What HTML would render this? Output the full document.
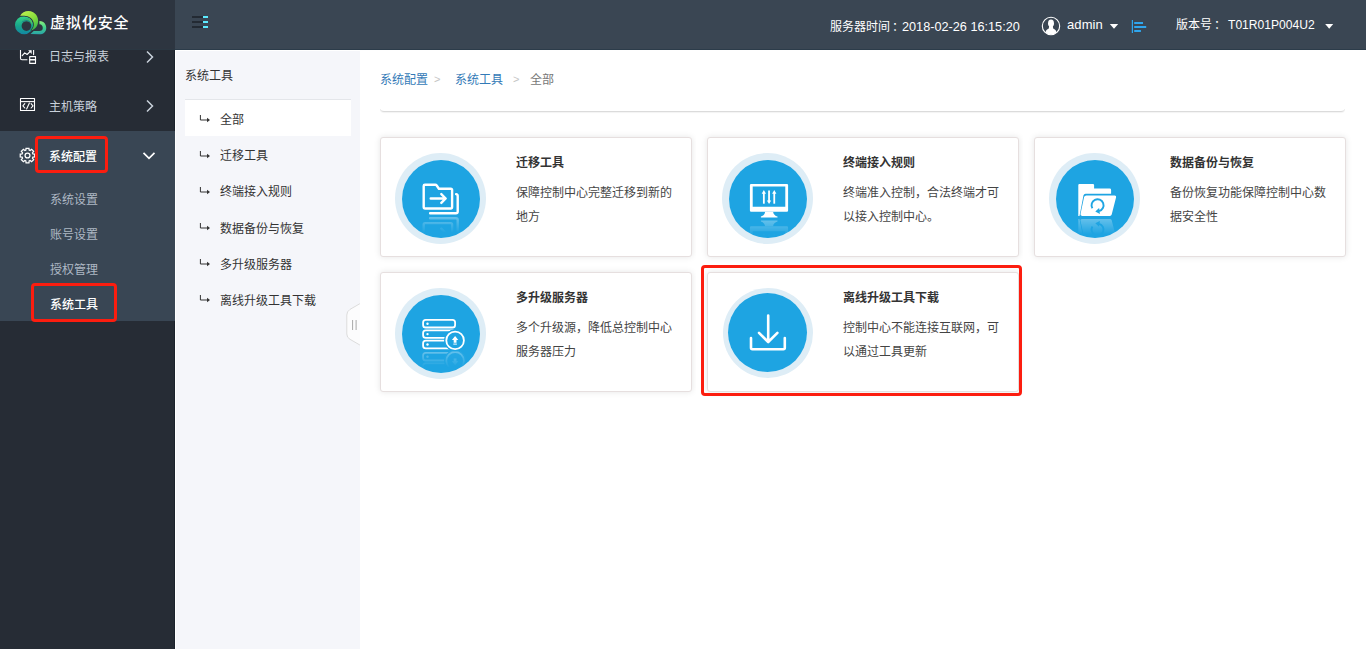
<!DOCTYPE html>
<html lang="zh-CN">
<head>
<meta charset="utf-8">
<title>虚拟化安全</title>
<style>
*{box-sizing:border-box;margin:0;padding:0}
html,body{width:1366px;height:649px;overflow:hidden;background:#fff}
body{font-family:"Liberation Sans","Noto Sans CJK SC",sans-serif;font-size:12px;color:#333;position:relative}
.abs{position:absolute}
/* header */
#hdr{z-index:5;position:absolute;left:0;top:0;width:1366px;height:50px;background:#3a4653;border-bottom:1px solid #2c3c4a}
#logo{position:absolute;left:0;top:0;width:175px;height:50px;background:#2d3540;border-bottom:1px solid #2b3742}
#logo .t{position:absolute;left:50px;top:11px;font-size:15px;line-height:24px;color:#fff;font-weight:500;letter-spacing:.9px;white-space:nowrap}
.ht{position:absolute;color:#fff;font-size:12px;line-height:20px;white-space:nowrap}
/* sidebar */
#side{position:absolute;left:0;top:50px;width:175px;height:599px;background:#262c35;border-right:1px solid #1b222c}
#side .act{position:absolute;left:0;top:81px;width:175px;height:190px;background:#394654}
.m1{position:absolute;left:49px;font-size:12px;line-height:20px;color:#c9d1db;white-space:nowrap}
.m2{position:absolute;left:50px;font-size:12px;line-height:20px;color:#aeb8c4;white-space:nowrap}
.red{position:absolute;border:3px solid #fc1d0f;border-radius:4px}
/* sub panel */
#sub{position:absolute;left:175px;top:50px;width:185px;height:599px;background:#f5f6fa;border-left:1px solid #fff;border-top:1px solid #fff}
#sub .ttl{position:absolute;left:9px;top:15px;font-size:12px;line-height:20px;color:#333}
#sub .sel{position:absolute;left:9px;top:48px;width:166px;height:37px;background:#fff;border-top:1px solid #e4e6ea}
.s1{position:absolute;left:44px;font-size:12px;line-height:20px;color:#333;white-space:nowrap}
.ar{position:absolute;left:24px;width:10px;height:8px}
/* main */
#main{position:absolute;left:360px;top:50px;width:1006px;height:599px;background:#fff}
.bc{position:absolute;top:20px;font-size:12px;line-height:20px;color:#777;white-space:nowrap}
.bc a{color:#337ab7;text-decoration:none}
.bc.sp{color:#c4c4c4;font-size:11px;margin-top:-1px}
.bcl{position:absolute;left:20px;top:50px;width:965px;height:12px;border-bottom:1px solid #dbdbdb;border-radius:0 0 4px 4px;box-shadow:0 1px 1px rgba(0,0,0,.05);clip-path:inset(9px 0 -3px 0)}
.card{position:absolute;width:312px;height:120px;background:#fff;border:1px solid #e6dfdf;border-radius:3px;box-shadow:0 0 6px rgba(0,0,0,.10)}
.card .ring{position:absolute;left:14px;top:15px;width:91px;height:91px;border-radius:50%;background:#deedf6}
.card .disc{position:absolute;left:7px;top:7px;width:78px;height:78px;border-radius:50%;background:#1ea4e2}
.card .r5{left:15px;top:15px;width:90px;height:90px}.card .r5 .disc{left:5px;top:5px;width:79px;height:79px}
.card h3{position:absolute;left:135px;top:15px;font-size:12px;line-height:20px;font-weight:bold;color:#333;white-space:nowrap}
.card p{position:absolute;left:135px;top:43px;width:165px;font-size:12px;line-height:24px;color:#444}
</style>
</head>
<body>
<div id="hdr">
  <div id="logo"><svg class="abs" style="left:10px;top:5px" width="50" height="35" viewBox="0 0 927 649">
<defs>
<linearGradient id="lgA" x1="0" y1="0" x2="0" y2="1"><stop offset="0" stop-color="#35d68a"/><stop offset=".55" stop-color="#17a48c"/><stop offset="1" stop-color="#1287a3"/></linearGradient>
<linearGradient id="lgB" x1="0" y1="0" x2=".6" y2="1"><stop offset="0" stop-color="#c6f552"/><stop offset=".6" stop-color="#86dc3c"/><stop offset="1" stop-color="#3dbb4a"/></linearGradient>
<linearGradient id="lgC" x1="0" y1="0" x2="0" y2="1"><stop offset="0" stop-color="#8cf07a"/><stop offset=".5" stop-color="#3fd08c"/><stop offset="1" stop-color="#2ba3a8"/></linearGradient>
<linearGradient id="lgD" x1="0" y1="0" x2="1" y2="1"><stop offset="0" stop-color="#1fae8a"/><stop offset="1" stop-color="#5fcf4f"/></linearGradient>
</defs>
<path d="M545 296 C645 296 672 380 672 425 C672 503 612 543 550 543 L380 538 L440 482 L545 482 C588 482 608 458 608 425 C608 388 588 358 545 356 Z" fill="url(#lgC)"/>
<path fill-rule="evenodd" d="M262 203 A170 170 0 1 0 262 543 A170 170 0 1 0 262 203 Z M305 300 A90 90 0 1 1 305 480 A90 90 0 1 1 305 300 Z" fill="url(#lgA)"/>
<path d="M212 335 C235 265 330 235 385 275 C415 300 420 345 405 385 C395 325 350 292 300 296 C262 300 232 315 212 335 Z" fill="#14788c"/>
<path d="M215 322 C240 250 330 222 385 265 C415 290 418 335 405 370 C395 315 350 280 300 285 C262 289 232 302 215 322 Z" fill="url(#lgD)"/>
<path d="M385 472 C430 440 450 390 440 335 C425 255 350 200 262 200 L188 198" fill="none" stroke="#2a3440" stroke-width="26"/>
<path d="M188 198 C230 120 340 85 430 135 C520 185 545 300 500 390 C470 440 430 462 385 472 C430 440 450 390 440 335 C425 255 350 200 262 200 C235 200 210 200 188 198 Z" fill="url(#lgB)"/>
</svg><span class="t">虚拟化安全</span></div>
  <i class="abs" style="left:192px;top:16px;width:11px;height:2px;background:#232a33"></i><i class="abs" style="left:203px;top:16px;width:5px;height:2px;background:#5deaff"></i><i class="abs" style="left:192px;top:21px;width:11px;height:2px;background:#232a33"></i><i class="abs" style="left:203px;top:21px;width:5px;height:2px;background:#5deaff"></i><i class="abs" style="left:192px;top:26px;width:11px;height:2px;background:#232a33"></i><i class="abs" style="left:203px;top:26px;width:5px;height:2px;background:#5deaff"></i>
  <svg class="abs" style="left:1041px;top:16px" width="20" height="20" viewBox="0 0 20 20">
<defs><clipPath id="avc"><circle cx="10" cy="10" r="8.6"/></clipPath></defs>
<circle cx="10" cy="10" r="8.7" fill="none" stroke="#fff" stroke-width="1.1"/>
<g clip-path="url(#avc)" fill="#fff"><ellipse cx="10" cy="7.3" rx="3" ry="3.8"/><path d="M8.2 9.5 L11.8 9.5 L12.2 12.4 C13.2 13.2 14.6 13.6 15.2 15 L15.8 20 L4.2 20 L4.8 15 C5.4 13.6 6.8 13.2 7.8 12.4 Z"/></g>
</svg><svg class="abs" style="left:1109px;top:23px" width="10" height="6" viewBox="0 0 10 6"><path d="M0.8 1 L9.2 1 L5 5.7 Z" fill="#fff"/></svg><svg class="abs" style="left:1130px;top:18px" width="18" height="16" viewBox="0 0 18 16"><g fill="#2fa6ee"><rect x="1.8" y="2" width="1.2" height="13"/><rect x="4.2" y="4" width="8.8" height="2"/><rect x="4.2" y="8" width="12" height="2"/><rect x="4.2" y="12" width="6.7" height="2"/></g></svg><svg class="abs" style="left:1324px;top:23px" width="10" height="6" viewBox="0 0 10 6"><path d="M1.2 1 L9.2 1 L5.2 5.8 Z" fill="#fff"/></svg>
  <span class="ht" style="left:830px;top:17px">服务器时间</span><span class="ht" style="left:892px;top:17px">：</span>
  <span class="ht" style="left:902px;top:17px;font-size:12.7px">2018-02-26 16:15:20</span>
  <span class="ht" style="left:1067px;top:15px;font-size:13px;letter-spacing:.1px">admin</span>
  <span class="ht" style="left:1176px;top:15px">版本号</span><span class="ht" style="left:1214px;top:15px">：</span>
  <span class="ht" style="left:1228px;top:15px;font-size:12.1px">T01R01P004U2</span>
</div>
<div id="side">
  <div class="act"></div>
<svg class="abs" style="left:14px;top:-2px" width="30" height="21" viewBox="14 48 30 21" fill="none" stroke="#fff" stroke-width="1.1" stroke-linecap="round" stroke-linejoin="round">
<path d="M20.5 48 L20.5 58.3 Q20.5 59.8 22 59.8 L27 59.8"/><path d="M22.2 55.6 L24.7 52.9 L27.1 54.5 L30.6 51.2"/><path d="M28.2 50.3 L31.7 50.3 L31.7 54 Z" fill="#fff" stroke="none"/><path d="M33.6 48 L33.6 54.6"/>
<rect x="29.7" y="56.6" width="5.8" height="6.8"/><path d="M29.7 59.7 L35.5 59.7" stroke-width="1.4"/>
</svg>
<svg class="abs" style="left:14px;top:44px" width="30" height="21" viewBox="14 94 30 21" fill="none" stroke="#fff" stroke-width="1.1" stroke-linejoin="round">
<rect x="20.5" y="98.5" width="14" height="12"/><path d="M20.5 101.6 L34.5 101.6"/><path d="M24.8 103.6 L22.9 105.8 L24.8 108" stroke-linecap="round"/><path d="M29.4 103 L26.6 109" stroke-linecap="round"/><path d="M31.1 103.6 L33 105.8 L31.1 108" stroke-linecap="round"/>
</svg>
<svg class="abs" style="left:19px;top:97px" width="17" height="17" viewBox="-8.5 -8.5 17 17" fill="none" stroke="#fff" stroke-width="1.25" stroke-linejoin="miter">
<path d="M-1.65 -5.35 L-1.47 -7.25 L1.47 -7.25 L1.65 -5.35 L2.61 -4.95 L4.09 -6.17 L6.17 -4.09 L4.95 -2.61 L5.35 -1.65 L7.25 -1.47 L7.25 1.47 L5.35 1.65 L4.95 2.61 L6.17 4.09 L4.09 6.17 L2.61 4.95 L1.65 5.35 L1.47 7.25 L-1.47 7.25 L-1.65 5.35 L-2.61 4.95 L-4.09 6.17 L-6.17 4.09 L-4.95 2.61 L-5.35 1.65 L-7.25 1.47 L-7.25 -1.47 L-5.35 -1.65 L-4.95 -2.61 L-6.17 -4.09 L-4.09 -6.17 L-2.61 -4.95 Z"/><circle r="2.45"/>
</svg>
<svg class="abs" style="left:145px;top:0px" width="10" height="14" viewBox="0 0 10 14" fill="none" stroke="#c9d1db" stroke-width="1.5"><path d="M2 1.5 L7.5 7 L2 12.5"/></svg>
<svg class="abs" style="left:145px;top:49px" width="10" height="14" viewBox="0 0 10 14" fill="none" stroke="#c9d1db" stroke-width="1.5"><path d="M2 1.5 L7.5 7 L2 12.5"/></svg>
<svg class="abs" style="left:142px;top:101px" width="14" height="10" viewBox="0 0 14 10" fill="none" stroke="#fff" stroke-width="1.7"><path d="M1.5 1.8 L7 7.3 L12.5 1.8"/></svg>
  <span class="m1" style="top:-3px">日志与报表</span>
  <span class="m1" style="top:47px">主机策略</span>
  <span class="m1" style="top:97px;color:#fff;font-weight:500">系统配置</span>
  <span class="m2" style="top:140px">系统设置</span>
  <span class="m2" style="top:175px">账号设置</span>
  <span class="m2" style="top:210px">授权管理</span>
  <span class="m2" style="top:245px;color:#fff;font-weight:500">系统工具</span>
  <div class="red" style="left:35px;top:86px;width:73px;height:37px"></div>
  <div class="red" style="left:31px;top:233px;width:86px;height:39px"></div>
</div>
<div id="sub">
  <span class="ttl">系统工具</span>
  <div class="sel"></div>
<svg class="abs" style="left:22px;top:63px" width="14" height="10" viewBox="0 0 14 10"><path d="M2.4 1 L2.4 6 L9.5 6" fill="none" stroke="#333" stroke-width="1"/><path d="M9 3.7 L12 6 L9 8.3 Z" fill="#333"/></svg>
<svg class="abs" style="left:22px;top:99px" width="14" height="10" viewBox="0 0 14 10"><path d="M2.4 1 L2.4 6 L9.5 6" fill="none" stroke="#333" stroke-width="1"/><path d="M9 3.7 L12 6 L9 8.3 Z" fill="#333"/></svg>
<svg class="abs" style="left:22px;top:135px" width="14" height="10" viewBox="0 0 14 10"><path d="M2.4 1 L2.4 6 L9.5 6" fill="none" stroke="#333" stroke-width="1"/><path d="M9 3.7 L12 6 L9 8.3 Z" fill="#333"/></svg>
<svg class="abs" style="left:22px;top:171px" width="14" height="10" viewBox="0 0 14 10"><path d="M2.4 1 L2.4 6 L9.5 6" fill="none" stroke="#333" stroke-width="1"/><path d="M9 3.7 L12 6 L9 8.3 Z" fill="#333"/></svg>
<svg class="abs" style="left:22px;top:207px" width="14" height="10" viewBox="0 0 14 10"><path d="M2.4 1 L2.4 6 L9.5 6" fill="none" stroke="#333" stroke-width="1"/><path d="M9 3.7 L12 6 L9 8.3 Z" fill="#333"/></svg>
<svg class="abs" style="left:22px;top:243px" width="14" height="10" viewBox="0 0 14 10"><path d="M2.4 1 L2.4 6 L9.5 6" fill="none" stroke="#333" stroke-width="1"/><path d="M9 3.7 L12 6 L9 8.3 Z" fill="#333"/></svg>
<svg class="abs" style="left:168px;top:250px" width="17" height="48" viewBox="0 0 17 48"><path d="M16.5 2.3 L6 8.4 Q2.8 10.4 2.8 14 L2.8 33 Q2.8 36.6 6 38.3 L16.5 44.4 Z" fill="#fcfcfd" stroke="#dcdcdc" stroke-width="1"/><path d="M16.5 2 L16.5 45" stroke="#fff" stroke-width="1.2"/><path d="M8.6 19 L8.6 29 M12.1 19 L12.1 29" stroke="#a8a8a8" stroke-width="1"/></svg>
  <span class="s1" style="top:59px">全部</span>
  <span class="s1" style="top:95px">迁移工具</span>
  <span class="s1" style="top:131px">终端接入规则</span>
  <span class="s1" style="top:168px">数据备份与恢复</span>
  <span class="s1" style="top:204px">多升级服务器</span>
  <span class="s1" style="top:240px">离线升级工具下载</span>
</div>
<div id="main">
  <span class="bc" style="left:20px"><a>系统配置</a></span><span class="bc sp" style="left:74px">&gt;</span><span class="bc" style="left:95px"><a>系统工具</a></span><span class="bc sp" style="left:153px">&gt;</span><span class="bc" style="left:170px">全部</span>
  <div class="bcl"></div>
  <div class="card" style="left:20px;top:87px"><div class="ring"><div class="disc"></div><svg class="abs" style="left:0;top:0" width="90" height="90" viewBox="-0.5 -0.5 90 90">
<defs><linearGradient id="fd1" x1="0" y1="62.3" x2="0" y2="79.3" gradientUnits="userSpaceOnUse"><stop offset="0" stop-color="#fff" stop-opacity=".34"/><stop offset="1" stop-color="#fff" stop-opacity="0"/></linearGradient>
<mask id="mk1" maskUnits="userSpaceOnUse" x="0" y="0" width="90" height="90"><rect x="0" y="62.3" width="90" height="20" fill="url(#fd1)"/></mask>
<clipPath id="cp1"><circle cx="46" cy="46" r="39"/></clipPath></defs>
<g clip-path="url(#cp1)"><g mask="url(#mk1)"><g transform="translate(0 124.6) scale(1 -1)"><g fill="none" stroke="#fff" stroke-width="2.4" stroke-linejoin="round" stroke-linecap="round">
<path d="M28.2 32.4 Q28.2 31.2 29.4 31.2 L39.8 31.2 Q40.6 31.2 41.2 32 L43.4 35.2 L55.2 35.2 Q56.6 35.2 56.6 36.6 L56.6 53.6 Q56.6 55 55.2 55 L29.6 55 Q28.2 55 28.2 53.6 Z"/>
<path d="M60.6 40.6 Q62.2 40.8 62.2 42.4 L62.2 58 Q62.2 59.8 60.4 59.8 L34.6 59.8"/>
<path d="M35.2 45 L49.6 45 M45.8 40.6 L50.2 45 L45.8 49.4"/>
</g></g></g></g>
<g fill="none" stroke="#fff" stroke-width="2.4" stroke-linejoin="round" stroke-linecap="round">
<path d="M28.2 32.4 Q28.2 31.2 29.4 31.2 L39.8 31.2 Q40.6 31.2 41.2 32 L43.4 35.2 L55.2 35.2 Q56.6 35.2 56.6 36.6 L56.6 53.6 Q56.6 55 55.2 55 L29.6 55 Q28.2 55 28.2 53.6 Z"/>
<path d="M60.6 40.6 Q62.2 40.8 62.2 42.4 L62.2 58 Q62.2 59.8 60.4 59.8 L34.6 59.8"/>
<path d="M35.2 45 L49.6 45 M45.8 40.6 L50.2 45 L45.8 49.4"/>
</g>
</svg></div><h3>迁移工具</h3><p>保障控制中心完整迁移到新的地方</p></div>
  <div class="abs" style="left:336px;top:79px;width:11px;height:136px;background:#fff"></div><div class="card" style="left:347px;top:87px"><div class="ring"><div class="disc"></div><svg class="abs" style="left:0;top:0" width="90" height="90" viewBox="-0.5 -0.5 90 90">
<defs><linearGradient id="fd2" x1="0" y1="65.5" x2="0" y2="82.5" gradientUnits="userSpaceOnUse"><stop offset="0" stop-color="#fff" stop-opacity=".34"/><stop offset="1" stop-color="#fff" stop-opacity="0"/></linearGradient>
<mask id="mk2" maskUnits="userSpaceOnUse" x="0" y="0" width="90" height="90"><rect x="0" y="65.5" width="90" height="20" fill="url(#fd2)"/></mask>
<clipPath id="cp2"><circle cx="46" cy="46" r="39"/></clipPath></defs>
<g clip-path="url(#cp2)"><g mask="url(#mk2)"><g transform="translate(0 131.0) scale(1 -1)"><g fill="#fff">
<path fill-rule="evenodd" d="M28.6 30.4 L64.4 30.4 Q65.6 30.4 65.6 31.6 L65.6 57 Q65.6 58.2 64.4 58.2 L28.6 58.2 Q27.4 58.2 27.4 57 L27.4 31.6 Q27.4 30.4 28.6 30.4 Z M30.2 33.1 L30.2 53.3 L62.8 53.3 L62.8 33.1 Z"/>
<path d="M42.6 58.2 L50.6 58.2 C50.8 60.6 52.6 62.4 55 63 L55 64 L38.4 64 L38.4 63 C40.6 62.4 42.4 60.6 42.6 58.2 Z"/>
<rect x="40.45" y="38.6" width="1.8" height="11.6"/><path d="M39.2 40.2 L41.35 36.6 L43.5 40.2 Z"/>
<rect x="45.65" y="37" width="1.8" height="11.6"/><path d="M44.4 47 L46.55 50.6 L48.7 47 Z"/>
<rect x="50.85" y="38.6" width="1.8" height="11.6"/><path d="M49.6 40.2 L51.75 36.6 L53.9 40.2 Z"/>
</g></g></g></g>
<g fill="#fff">
<path fill-rule="evenodd" d="M28.6 30.4 L64.4 30.4 Q65.6 30.4 65.6 31.6 L65.6 57 Q65.6 58.2 64.4 58.2 L28.6 58.2 Q27.4 58.2 27.4 57 L27.4 31.6 Q27.4 30.4 28.6 30.4 Z M30.2 33.1 L30.2 53.3 L62.8 53.3 L62.8 33.1 Z"/>
<path d="M42.6 58.2 L50.6 58.2 C50.8 60.6 52.6 62.4 55 63 L55 64 L38.4 64 L38.4 63 C40.6 62.4 42.4 60.6 42.6 58.2 Z"/>
<rect x="40.45" y="38.6" width="1.8" height="11.6"/><path d="M39.2 40.2 L41.35 36.6 L43.5 40.2 Z"/>
<rect x="45.65" y="37" width="1.8" height="11.6"/><path d="M44.4 47 L46.55 50.6 L48.7 47 Z"/>
<rect x="50.85" y="38.6" width="1.8" height="11.6"/><path d="M49.6 40.2 L51.75 36.6 L53.9 40.2 Z"/>
</g>
</svg></div><h3>终端接入规则</h3><p>终端准入控制，合法终端才可以接入控制中心。</p></div>
  <div class="abs" style="left:663px;top:79px;width:11px;height:136px;background:#fff"></div><div class="card" style="left:674px;top:87px"><div class="ring"><div class="disc"></div><svg class="abs" style="left:0;top:0" width="90" height="90" viewBox="-0.5 -0.5 90 90">
<defs><linearGradient id="fd3" x1="0" y1="63.9" x2="0" y2="80.9" gradientUnits="userSpaceOnUse"><stop offset="0" stop-color="#fff" stop-opacity=".34"/><stop offset="1" stop-color="#fff" stop-opacity="0"/></linearGradient>
<mask id="mk3" maskUnits="userSpaceOnUse" x="0" y="0" width="90" height="90"><rect x="0" y="63.9" width="90" height="20" fill="url(#fd3)"/></mask>
<clipPath id="cp3"><circle cx="46" cy="46" r="39"/></clipPath></defs>
<g clip-path="url(#cp3)"><g mask="url(#mk3)"><g transform="translate(0 127.8) scale(1 -1)"><g>
<path d="M28.8 31.6 Q28.8 30.4 30 30.4 L43.4 30.4 Q44.6 30.4 44.6 31.6 L44.6 35 L60.2 35 Q61.6 35 61.6 36.4 L61.6 40.2 L36 40.2 Q34.4 40.2 34 41.8 L30 62.4 L28.8 62.4 Z" fill="#fff"/>
<path d="M36.8 42 L65.2 42 Q67 42 66.6 43.8 L62.2 61 Q61.8 62.4 60.4 62.4 L32.6 62.4 Q30.6 62.4 31 60.6 L34.6 43.6 Q35 42 36.8 42 Z" fill="#fff"/>
<path d="M42.9 54.8 A6 6 0 1 1 49.6 57.5" fill="none" stroke="#1ea5e3" stroke-width="1.9"/>
<path d="M49.6 54.6 L45.8 58 L50.4 60.4 Z" fill="#1ea5e3"/>
</g></g></g></g>
<g>
<path d="M28.8 31.6 Q28.8 30.4 30 30.4 L43.4 30.4 Q44.6 30.4 44.6 31.6 L44.6 35 L60.2 35 Q61.6 35 61.6 36.4 L61.6 40.2 L36 40.2 Q34.4 40.2 34 41.8 L30 62.4 L28.8 62.4 Z" fill="#fff"/>
<path d="M36.8 42 L65.2 42 Q67 42 66.6 43.8 L62.2 61 Q61.8 62.4 60.4 62.4 L32.6 62.4 Q30.6 62.4 31 60.6 L34.6 43.6 Q35 42 36.8 42 Z" fill="#fff"/>
<path d="M42.9 54.8 A6 6 0 1 1 49.6 57.5" fill="none" stroke="#1ea5e3" stroke-width="1.9"/>
<path d="M49.6 54.6 L45.8 58 L50.4 60.4 Z" fill="#1ea5e3"/>
</g>
</svg></div><h3>数据备份与恢复</h3><p>备份恢复功能保障控制中心数据安全性</p></div>
  <div class="card" style="left:20px;top:222px"><div class="ring"><div class="disc"></div><svg class="abs" style="left:0;top:0" width="90" height="90" viewBox="-0.5 -0.5 90 90">
<defs><linearGradient id="fd4" x1="0" y1="62.1" x2="0" y2="79.1" gradientUnits="userSpaceOnUse"><stop offset="0" stop-color="#fff" stop-opacity=".34"/><stop offset="1" stop-color="#fff" stop-opacity="0"/></linearGradient>
<mask id="mk4" maskUnits="userSpaceOnUse" x="0" y="0" width="90" height="90"><rect x="0" y="62.1" width="90" height="20" fill="url(#fd4)"/></mask>
<clipPath id="cp4"><circle cx="46" cy="46" r="39"/></clipPath></defs>
<g clip-path="url(#cp4)"><g mask="url(#mk4)"><g transform="translate(0 124.2) scale(1 -1)"><g fill="none" stroke="#fff" stroke-width="1.8">
<rect x="27.6" y="31.4" width="32" height="7.6" rx="2.6"/><rect x="27.6" y="41.8" width="32" height="7.6" rx="2.6"/><rect x="27.6" y="52.2" width="32" height="7.6" rx="2.6"/>
<circle cx="32" cy="56" r="1.2" fill="#fff" stroke="none"/>
<circle cx="59.6" cy="51.9" r="10.6" fill="#3aaee6" stroke="#3aaee6" stroke-width="1"/>
<circle cx="59.6" cy="51.9" r="8.8" fill="#3aaee6"/>
<path d="M59.6 47.4 L62.8 51.4 L61 51.4 L61 54.2 L58.2 54.2 L58.2 51.4 L56.4 51.4 Z" fill="#fff" stroke="none"/>
</g></g></g></g>
<g fill="none" stroke="#fff" stroke-width="1.8">
<rect x="27.6" y="31.4" width="32" height="7.6" rx="2.6"/><rect x="27.6" y="41.8" width="32" height="7.6" rx="2.6"/><rect x="27.6" y="52.2" width="32" height="7.6" rx="2.6"/>
<circle cx="32" cy="35.2" r="1.2" fill="#fff" stroke="none"/><circle cx="32" cy="45.6" r="1.2" fill="#fff" stroke="none"/><circle cx="32" cy="56" r="1.2" fill="#fff" stroke="none"/>
<circle cx="59.6" cy="51.9" r="10.6" fill="#1ea5e3" stroke="#1ea5e3" stroke-width="1"/>
<circle cx="59.6" cy="51.9" r="8.8" fill="#1ea5e3"/>
<path d="M59.6 47.4 L62.8 51.4 L61 51.4 L61 54.2 L58.2 54.2 L58.2 51.4 L56.4 51.4 Z" fill="#fff" stroke="none"/><path d="M57.8 55.6 L61.4 55.6" stroke-width="1"/>
</g>
</svg></div><h3>多升级服务器</h3><p>多个升级源，降低总控制中心服务器压力</p></div>
  <div class="abs" style="left:336px;top:214px;width:11px;height:136px;background:#fff"></div><div class="card" style="left:347px;top:222px"><div class="ring r5"><div class="disc"></div><svg class="abs" style="left:0;top:0" width="90" height="90" viewBox="723 288 90 90"><g fill="none" stroke="#fff" stroke-width="2.6" stroke-linecap="round" stroke-linejoin="round"><path d="M768.2 315.6 L768.2 341.6 M759 332.8 L768.2 342 L777.4 332.8"/><path d="M751 338 L751 347.8 Q751 349.2 752.4 349.2 L783.4 349.2 Q784.8 349.2 784.8 347.8 L784.8 338"/></g></svg></div><h3>离线升级工具下载</h3><p>控制中心不能连接互联网，可以通过工具更新</p></div>
  <div class="red" style="left:341px;top:215px;width:321px;height:131px"></div>
</div>
</body>
</html>
